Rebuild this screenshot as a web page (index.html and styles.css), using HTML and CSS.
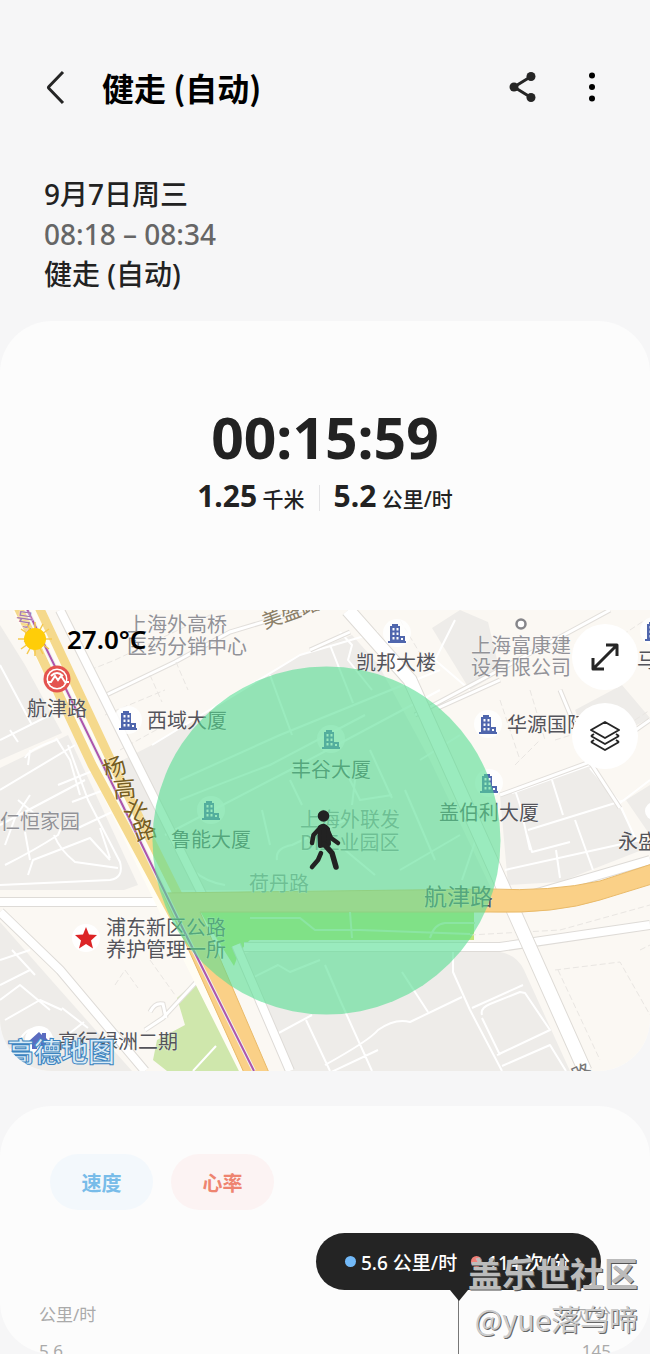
FILE: index.html
```html
<!DOCTYPE html>
<html lang="zh-CN">
<head>
<meta charset="utf-8">
<meta name="viewport" content="width=device-width, initial-scale=1">
<title>健走 (自动)</title>
<link rel="stylesheet" href="styles.css">
</head>
<body>
<header class="topbar">
  <button class="icon-btn" aria-label="返回"><svg width="24" height="36" viewBox="0 0 24 36"><path d="M19 3 5 17.500Q4 18.500 5 19.500L19 34" class="line"/></svg></button>
  <h1 class="title">健走 (自动)</h1>
  <button class="icon-btn share" aria-label="分享"><svg width="28" height="32" viewBox="0 0 28 32"><path d="M22 5.500 5 16 22 26.500" fill="none" stroke="#252525" stroke-width="3"/><circle cx="22" cy="5.500" r="4.500"/><circle cx="5" cy="16" r="4.500"/><circle cx="22" cy="26.500" r="4.500"/></svg></button>
  <button class="icon-btn more" aria-label="更多"><svg width="8" height="32" viewBox="0 0 8 32"><circle cx="4" cy="4.500" r="3"/><circle cx="4" cy="16" r="3"/><circle cx="4" cy="27.500" r="3"/></svg></button>
</header>
<section class="summary">
  <p>9月7日周三</p>
  <p class="time">08:18 – 08:34</p>
  <p>健走 (自动)</p>
</section>
<main class="cards">
<section class="card">
  <div class="stats">
    <p class="duration">00:15:59</p>
    <div class="metrics">
      <p><strong>1.25</strong> 千米</p>
      <p class="speed"><strong>5.2</strong> 公里/时</p>
    </div>
  </div>
  <div class="map">
    <svg class="map-art" viewBox="0 610 650 461" preserveAspectRatio="xMidYMid slice">
      <defs>
        <g id="bld"><circle r="14" fill="#fff" opacity=".8"/><path d="M-7-7h2v-2h6v2h2v10h5v5h1v2H-9V8h2zM-4.500-5v2.500h2V-5zm4 0v2.500h2V-5zm-4 4.500V2h2V-.5zm4 0V2h2V-.5zm-4 4.500v2.500h2V4zm4 0v2.500h2V4zm4.500 1v2h2V5z" fill="#4f66ad" fill-rule="evenodd"/></g>
      </defs>
      <path d="M0 610H650V1071H0z" fill="#fbf8f3"/>
      <g fill="#eeece9">
        <path d="M0 625 25 665 62 733 0 760zM0 768 68 735 138 885 124 890H0z"/>
        <path d="M0 922 60 990 132 1071H0z"/>
        <path d="M113 765 152 745 300 655 352 635 378 664 430 760 492 890H205L152 890z"/>
        <path d="M432 628 460 610 488 622 500 672 470 690zM575 710 622 685 650 718 590 750z"/>
        <path d="M500 795 590 765 620 808 642 850 560 882 508 885zM626 800 650 785V835z"/>
        <path d="M450 952H500Q517 955 524 970L570 1071H290L238 960Q246 947 280 950z"/>
      </g>
      <path d="M177 998 197 980 245 1071H167L153 1060 157 1040 185 1025z" fill="#cfe7ac"/>
      <path d="M200 911H474V940H250Q240 948 234 966L208 925z" fill="#bfe577"/>
      <g class="street">
        <path d="M0 665 32 725M0 740 60 710M10 730 18 742M25 758Q28 750 56 740M28 765 30 750M56 738 70 760 80 795M0 790 75 745M0 825 85 780M5 865Q35 850 58 835L62 826M18 800 36 815M68 745 88 800 120 862Q124 878 110 880L0 885M28 875 33 860 90 838 110 860M25 832 30 860M30 795 15 818 5 845M54 835Q60 850 75 862L118 868M58 785 95 770M72 802 104 790M78 828 112 812M100 828 110 858"/>
        <path d="M0 1000 20 985 50 1010M12 950 35 975M0 960 30 950M5 1020 40 1000 62 1010M18 1045Q25 1025 40 1030T58 1050M42 1055 84 1022M0 1055 30 1040M62 1008 88 1028M30 970 0 985"/>
        <path d="M152 745 300 655 378 632M180 780 280 735 440 670M180 800Q230 780 270 765L365 715M270 675 292 735M330 645 353 703M340 632 352 645 348 660 372 690"/>
        <path d="M165 835 290 770 440 690M262 810 270 845M290 780 302 805M345 770 360 800 392 795M370 750 392 798M355 780 352 805M405 790 435 860M277 860Q275 848 292 845L345 820M345 850 375 875M400 870 460 835M460 780 475 842 462 880M420 760 460 735M170 840Q190 880 225 885"/>
        <path d="M455 620 435 660 470 690M512 793 590 765M515 790 520 805 530 850M528 830 625 800M527 835 532 852 570 842M552 780 563 815M575 820 593 870M556 850 560 878M505 870 640 840M590 768 620 803 650 780M620 805 636 840"/>
        <path d="M325 965 340 1000 372 1071M402 972 428 1012M378 1050 325 1075M325 1065Q370 1040 378 1030Q395 1018 410 1022L462 997M453 950V972L470 1010 502 1071M472 1008 523 985M482 1015Q480 1008 490 1004L520 992 525 993 550 1030 497 1055M482 1018 500 1055M502 1066 550 1045 566 1071M248 980 278 965 290 972 320 960M275 1035 312 1015M306 1020 330 1071M193 1071 216 1046"/>
      </g>
      <g class="lane-edge"><path d="M100 698 175 662 230 632 320 605M415 715 490 675 610 610M438 708 500 680M500 795 590 762 650 720M560 690 590 762 620 808M310 650 350 632M145 1030 163 1018 200 978M150 1012Q155 1002 163 1004L166 1018"/></g>
      <g class="lane"><path d="M100 698 175 662 230 632 320 605M415 715 490 675 610 610M438 708 500 680M500 795 590 762 650 720M560 690 590 762 620 808M310 650 350 632M145 1030 163 1018 200 978M150 1012Q155 1002 163 1004L166 1018"/></g>
      <g class="street dashed">
        <path d="M90 670 115 660 210 615M105 715 165 690M120 750 165 725M555 740 620 720M620 730 650 710M600 650 645 620M515 765 540 740M470 935 560 930 650 905M558 970 600 1060M555 970 620 962 650 1015M640 950 650 945M115 985 125 970 138 988M150 960 175 995"/>
        <path d="M150 675 162 702M176 662 188 690M400 620 430 670M500 700 520 760M530 690 545 740M580 640 600 690"/>
      </g>
      <g class="avenue-edge"><path d="M60 610 205 900M0 902H165M163 898 520 898 650 860M0 912 60 970 145 1071M236 945 290 1071M244 947H500L650 925"/></g>
      <g class="avenue"><path d="M60 610 205 900M0 902H165M163 898 520 898 650 860M0 912 60 970 145 1071M236 945 290 1071M244 947H500L650 925"/></g>
      <path d="M348 610 410 680 502 885 585 1071" fill="none" stroke="#dedbd6" stroke-width="15"/>
      <path d="M348 610 410 680 502 885 585 1071" fill="none" stroke="#fff" stroke-width="13"/>
      <path d="M25 605 103 765 177 917 254 1071" fill="none" stroke="#fffdf4" stroke-width="27"/>
      <path d="M17 605 92 765 174 917" fill="none" stroke="#f5d98c" stroke-width="9"/>
      <path d="M38 605 113 765 189 917" fill="none" stroke="#f5d98c" stroke-width="9"/>
      <path d="M163 893 245 1075H270L200 912H490Q555 914 600 900L652 884V864L600 881Q550 892 490 889z" fill="#fad087" stroke="#e9ba69"/>
      <path d="M25 605 103 765 177 917 254 1071" fill="none" stroke="#eee" stroke-width="4"/>
      <path d="M25 605 103 765 177 917 254 1071" fill="none" stroke="#ad55ac" stroke-width="2"/>
      <path d="M250 918H300L315 930H360L470 934M350 912 352 938M430 938Q434 924 445 923H475" fill="none" stroke="#d9f0bc" stroke-width="2"/>
      <use href="#bld" x="128" y="720"/><use href="#bld" x="397" y="633"/><use href="#bld" x="488" y="724"/><use href="#bld" x="331" y="739"/><use href="#bld" x="211" y="810"/><use href="#bld" x="489" y="783"/><use href="#bld" x="654" y="631"/>
      <circle cx="654" cy="811" r="9" fill="#fff"/>
      <circle cx="521" cy="624" r="4.500" fill="#fff" stroke="#86868a" stroke-width="2.500"/>
      <circle cx="86" cy="938" r="14" fill="#fff"/><path d="m86 927 3 7.500 8 .5-6 5.500 2 8-7-4.500-7 4.500 2-8-6-5.500 8-.5z" fill="#dc2426"/>
      <circle cx="39" cy="1040" r="14" fill="#fff"/><path d="m29 1041 10-9 3 3v-2h4v5l3 3h-3v8h-5v-6h-4v6h-5v-8z" fill="#5b6cc0"/>
      <circle cx="57" cy="679" r="13.500" fill="#e4534f"/><circle cx="57" cy="679" r="10.500" fill="#fff"/><circle cx="57" cy="679" r="9" fill="#e4534f"/><path d="M47 682h4l4-6 3 4 3-4 4 6h4M51 676q6-6 12 0" fill="none" stroke="#fff" stroke-width="2"/>
      <g class="labels">
        <text x="27" y="716">航津路</text><text x="147" y="728">西域大厦</text><text x="356" y="670">凯邦大楼</text><text x="507" y="732">华源国际</text><text x="291" y="777">丰谷大厦</text><text x="171" y="847">鲁能大厦</text><text x="439" y="820">盖伯利大厦</text><text x="618" y="849">永盛</text><text x="637" y="668">马</text>
        <text x="106" y="935">浦东新区公路</text><text x="106" y="957">养护管理一所</text><text x="58" y="1049">高行绿洲二期</text>
        <text class="big" x="424" y="905">航津路</text><text class="plain" x="576" y="1084" transform="rotate(-25 576 1084)">路</text>
        <g class="pale"><text x="127" y="632">上海外高桥</text><text x="127" y="654">医药分销中心</text><text x="471" y="653">上海富康建</text><text x="471" y="675">设有限公司</text><text x="0" y="829">仁恒家园</text><text x="300" y="827">上海外联发</text><text x="300" y="850">DI工业园区</text><text x="249" y="891">荷丹路</text></g>
        <text class="brown" x="265" y="629" transform="rotate(-20 265 629)">美盛路</text>
        <g class="road-name"><text x="103" y="776" transform="rotate(-20 114 768)">杨</text><text x="113" y="797" transform="rotate(-5 124 789)">高</text><text x="124" y="818" transform="rotate(25 135 811)">北</text><text x="134" y="839" transform="rotate(-18 145 833)">路</text></g>
        <text class="metro" x="16" y="626" transform="rotate(8 25 617)">号</text><text class="metro" x="24" y="643" transform="rotate(10 32 636)">线</text>
      </g>
      <circle cx="326.500" cy="840.500" r="174" fill="#57de92" fill-opacity=".6"/>
      <g stroke="#222" stroke-linecap="round" stroke-linejoin="round" fill="none"><circle cx="323.500" cy="816" r="5.800" fill="#222" stroke="none"/><path d="M320 828 313.500 835 312 843M327 829 331 838 338 843" stroke-width="4.500"/><path d="M320 827Q324 824 328 829L329 844 320 846Q319 836 320 827z" fill="#222" stroke-width="4"/><path d="M321 853 318 860 312 867" stroke-width="4.500"/><path d="M324 844 332 853 336 867" stroke-width="5.500"/></g>
      <text class="provider" x="7" y="1062">高德地图</text>
    </svg>
    <div class="weather"><svg width="34" height="34" viewBox="-17 -17 34 34"><path d="M0-17V17M-17 0H17M-14-10 14 10M-14 10 14-10M-8-15 8 15M-8 15 8-15" stroke="#f5c950" stroke-width="1.500"/><circle r="11" fill="#ffcd08"/></svg><span>27.0°C</span></div>
    <div class="map-tools">
      <button class="round" aria-label="展开地图"><svg width="30" height="30" viewBox="0 0 30 30" class="line"><path d="M3 27 27 3M16 3H27V14M3 16V27H14"/></svg></button>
      <button class="round" aria-label="图层"><svg width="34" height="34" viewBox="0 0 34 34" class="line thin"><path d="M17 3 31 11 17 19 3 11zM3 17l14 8 14-8M3 23l14 8 14-8M3 17l3-2M31 17l-3-2M3 23l3-2M31 23l-3-2"/></svg></button>
    </div>
  </div>
</section>
<section class="card chart-card">
  <div class="tabs"><button class="tab">速度</button><button class="tab heart">心率</button></div>
  <div class="axis"><span>公里/时</span><span>次/分</span></div>
  <div class="axis values"><span>5.6</span><span>145</span></div>
  <div class="marker"><div class="tip"><i class="dot"></i><span>5.6 公里/时</span><i class="dot red"></i><span>114 次/分</span></div></div>
  <div class="credit"><p class="community">盖乐世社区</p><p class="author">@yue落乌啼</p></div>
</section>
</main>
</body>
</html>
```
FILE: styles.css
```css
* { box-sizing: border-box; }
body { margin: 0; background: #f6f6f7; color: #222; font-family: "Noto Sans", "Noto Sans CJK SC", sans-serif; }
p, h1 { margin: 0; }
button { border: 0; padding: 0; background: none; font: inherit; color: inherit; }
svg { display: block; }
.line { fill: none; stroke: #252525; stroke-width: 3; stroke-linejoin: round; }
.thin { stroke-width: 2; }
.topbar { display: flex; align-items: center; height: 174px; padding: 0 54px 0 44px; }
.icon-btn { fill: #252525; }
.title { flex: 1; padding-left: 34px; color: #000; font-size: 32px; font-weight: 600; font-family: "Noto Sans CJK SC", sans-serif; line-height: 48px; }
.share { margin-right: 51px; }
.more { fill: #000; }
.summary { padding: 0 44px; height: 147px; font-size: 28px; font-weight: 500; line-height: 40px; }
.time { color: #666; }
.cards { display: grid; gap: 35px; }
.card { position: relative; border-radius: 52px; overflow: hidden; background: #fcfcfc; }
.stats { padding: 78px 20px 90px; text-align: center; }
.duration { font-size: 57px; line-height: 76px; font-weight: 700; }
.metrics { display: flex; justify-content: center; align-items: center; height: 45px; font-size: 21px; font-weight: 500; line-height: 44px; }
.metrics strong { font-size: 30px; }
.metrics p + p { margin-left: 14px; padding-left: 15px; background: linear-gradient(#e3e3e5, #e3e3e5) left center / 1px 26px no-repeat; }
.map { position: relative; height: 461px; }
.map-art { width: 100%; height: 100%; }
.street { fill: none; stroke: #fff; stroke-width: 2; stroke-linejoin: round; }
.dashed { stroke: #e9e6e2; stroke-width: 1; stroke-dasharray: 6 3; }
.lane-edge { fill: none; stroke: #e2dfdb; stroke-width: 5; }
.lane { fill: none; stroke: #fff; stroke-width: 3; }
.avenue-edge { fill: none; stroke: #dedbd7; stroke-width: 10; }
.avenue { fill: none; stroke: #fff; stroke-width: 8; }
.labels { font-family: "Noto Sans CJK SC", sans-serif; font-size: 20px; font-weight: 400; fill: #54545a; stroke: #fff; stroke-opacity: .5; stroke-width: 1; paint-order: stroke; }
.pale { fill: #929297; }
.plain { fill: #777; }
.big { font-size: 23px; }
.brown { fill: #8c8068; }
.road-name { font-size: 23px; fill: #765e22; }
.metro { font-size: 18px; fill: #a57ab0; }
.provider { font: 700 27px "Noto Sans CJK SC", sans-serif; fill: #d9ecf8; stroke: #3c84c0; stroke-width: 1; }
.weather { position: absolute; left: 18px; top: 12px; display: flex; align-items: center; gap: 15px; color: #000; font-size: 26px; font-weight: 600; line-height: 34px; }
.map-tools { position: absolute; right: 12px; top: 14px; display: grid; gap: 13px; }
.round { display: grid; place-items: center; width: 66px; height: 66px; border-radius: 50%; background: #fff; }
.chart-card { height: 248px; padding: 48px 39px 0; }
.tabs { display: flex; gap: 18px; padding-left: 11px; }
.tab { width: 103px; height: 56px; border-radius: 28px; background: #f3f8fc; color: #78bce9; font-size: 20px; font-weight: 700; }
.heart { background: #fcf3f3; color: #ee8470; }
.axis { display: flex; justify-content: space-between; margin-top: 92px; color: #aaa; font-size: 17px; line-height: 26px; }
.values { margin-top: 10px; }
.marker { position: absolute; right: 49px; top: 127px; height: 121px; background: linear-gradient(#777, #777) center / 1px 100% no-repeat; }
.tip { position: relative; display: flex; align-items: center; width: 285px; height: 57px; padding-left: 29px; border-radius: 29px; background: #242424; color: #fff; font-size: 19px; font-weight: 500; white-space: nowrap; }
.tip::after { content: ""; position: absolute; left: 50%; top: 100%; margin-left: -9px; border: 9px solid transparent; border-top: 11px solid #242424; border-bottom: 0; }
.dot { width: 11px; height: 11px; margin-right: 5px; border-radius: 50%; background: #72b9f8; }
.red { margin-left: 14px; background: #ef8178; }
.credit { position: absolute; right: 12px; top: 143px; text-align: right; font-family: "Noto Sans CJK SC", sans-serif; }
.community { font-size: 34px; line-height: 48px; font-weight: 700; color: #bbb; text-shadow: 1px 1px #555; }
.author { font-size: 29px; line-height: 42px; color: #ccc; text-shadow: 1px 1px #666; }
```
